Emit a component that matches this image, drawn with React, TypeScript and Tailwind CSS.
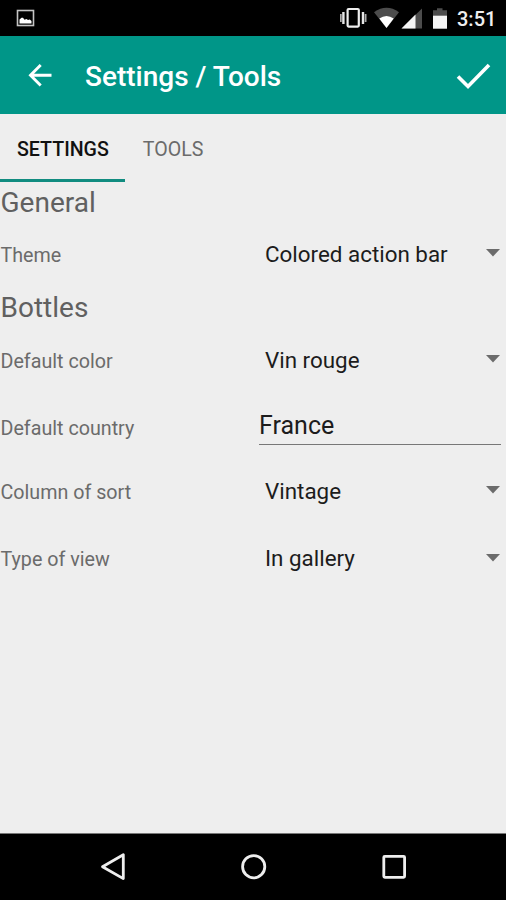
import { useState } from 'react';

interface SettingRow {
  label: string;
  value: string;
  height: string;
  editable?: boolean;
}

const general: SettingRow[] = [
  { label: 'Theme', value: 'Colored action bar', height: 'h-[67px]' },
];

const bottles: SettingRow[] = [
  { label: 'Default color', value: 'Vin rouge', height: 'h-[69px]' },
  { label: 'Default country', value: 'France', height: 'h-[63px]', editable: true },
  { label: 'Column of sort', value: 'Vintage', height: 'h-[67px]' },
  { label: 'Type of view', value: 'In gallery', height: 'h-[68px]' },
];

function StatusBar() {
  return (
    <div className="flex h-9 shrink-0 items-center justify-between bg-black text-white">
      <svg className="ml-4 h-[18px] w-[19px]" viewBox="0 0 19 18" fill="none">
        <rect x="1.5" y="1.5" width="16" height="15" stroke="#c4c4c4" strokeWidth="1.6" />
        <path d="M3.5 14.5v-4l2-1.7h1.5l1.5 2 2-.8 1.5 1 1.8-.5 1.7 1.5v2.5z" fill="#fff" />
      </svg>
      <div className="flex items-center">
        <svg className="h-9 w-[115px]" viewBox="340 0 115 36" fill="none">
          <path d="M340.8 14v8M365.6 14v8" stroke="#aaa" strokeWidth="1.8" />
          <path d="M343.4 12v12M363 12v12" stroke="#e5e5e5" strokeWidth="2.4" />
          <rect x="347.6" y="9" width="11.2" height="17.6" rx="1" stroke="#eee" strokeWidth="2.2" />
          <path d="M374 12.2Q386.5 3.5 399 12.2L386.5 28z" fill="#4c4c4c" />
          <path d="M379.3 18.5Q386.5 13.5 393.7 18.5L386.5 28z" fill="#fff" />
          <path d="M422 8.5V28.5H401.5z" fill="#4c4c4c" />
          <path d="M415.5 14.5V28.5H401.5z" fill="#f5f5f5" />
          <path d="M433 10.2h4v-2h5.5v2h4.5v5.8h-14z" fill="#4c4c4c" />
          <rect x="433" y="15.7" width="14" height="13" fill="#f5f5f5" />
        </svg>
        <span className="w-[51px] pt-0.5 pl-[2px] text-[20px] font-medium whitespace-nowrap text-[#eee]">3:51</span>
      </div>
    </div>
  );
}

function ActionBar() {
  return (
    <header className="flex h-[78px] shrink-0 items-center bg-[#009688] pt-[2px] text-white">
      <button className="ml-7 h-6 w-6" aria-label="Back">
        <svg viewBox="0 0 24 24" fill="none" stroke="currentColor" strokeWidth="2.9">
          <path d="M23.5 11.2H2.5M12.7 1 2.5 11.2 12.7 21.5" />
        </svg>
      </button>
      <h1 className="ml-[33px] flex-1 pt-0.5 text-[28px] font-medium whitespace-nowrap">Settings / Tools</h1>
      <button className="mr-[15px] h-7 w-[35px]" aria-label="Save">
        <svg viewBox="0 0 35 28" fill="none" stroke="currentColor" strokeWidth="3.6">
          <path d="M2 14.5 12 24.5 33 3" />
        </svg>
      </button>
    </header>
  );
}

function Row({ label, value, height, editable }: SettingRow) {
  return (
    <div className={`flex items-center ${height}`}>
      <span className={`w-[259px] pl-[0.5px] text-[19.7px] text-[#6b6b6b] ${editable ? 'pt-1' : 'pt-0.5'}`}>
        {label}
      </span>
      {editable ? (
        <div className="mr-[5px] mb-[3px] h-[39px] flex-1 border-b border-[#777] text-[25px] leading-[39px] text-[#1c1c1c]">
          {value}
        </div>
      ) : (
        <div className="flex flex-1 items-center justify-between pr-1.5 pl-1.5">
          <span className="text-[22.4px] text-[#1c1c1c]">{value}</span>
          <svg className="mb-0.5 h-2 w-[14px]" viewBox="0 0 14 8">
            <path d="M0 0h14L7 7.5z" fill="#6b6b6b" />
          </svg>
        </div>
      )}
    </div>
  );
}

function Section({ title, rows }: { title: string; rows: SettingRow[] }) {
  return (
    <section>
      <h2 className="flex h-[38px] items-center pt-0.5 pl-[0.5px] text-[28px] text-[#606060]">{title}</h2>
      {rows.map((row) => (
        <Row key={row.label} {...row} />
      ))}
    </section>
  );
}

function NavBar() {
  return (
    <nav className="flex h-[67px] shrink-0 items-center justify-center border-t border-[#777] bg-black">
      <svg className="h-[66px] w-[506px]" viewBox="0 834 506 66" fill="none" stroke="#eee" strokeWidth="2.8">
        <path d="M102.5 866.7 123.3 854.8V878.6z" strokeLinejoin="round" />
        <circle cx="253.7" cy="866.7" r="11.1" />
        <rect x="383.8" y="856.3" width="20.8" height="21" rx="1" />
      </svg>
    </nav>
  );
}

export default function App() {
  const [tab, setTab] = useState('SETTINGS');

  return (
    <div className="flex h-[900px] w-[506px] flex-col overflow-hidden bg-[#eee] font-['Roboto',sans-serif]">
      <StatusBar />
      <ActionBar />
      <div className="flex h-[68px] shrink-0 gap-px text-[19.6px]">
        {['SETTINGS', 'TOOLS'].map((name) => (
          <button
            key={name}
            onClick={() => setTab(name)}
            className={`border-b-[3px] pt-1.5 pr-4 pl-[17px] ${
              tab === name ? 'border-[#118c80] font-medium text-[#111]' : 'border-transparent text-[#6b6b6b]'
            }`}
          >
            {name}
          </button>
        ))}
      </div>
      <main className="flex-1 pt-px">
        <Section title="General" rows={general} />
        <Section title="Bottles" rows={bottles} />
      </main>
      <NavBar />
    </div>
  );
}
